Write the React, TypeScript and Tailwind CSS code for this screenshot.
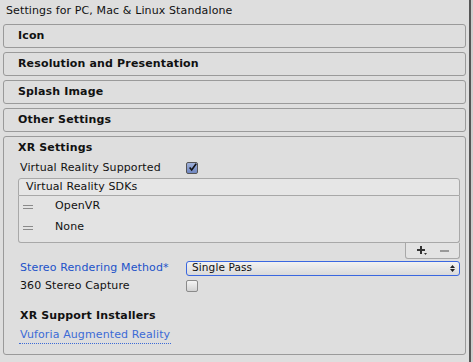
import React from "react";

const font = { fontFamily: '"DejaVu Sans", Verdana, sans-serif' };

function Foldout({ title }: { title: string }) {
  return (
    <div className="h-[24px] rounded-[3px] border border-[#9a9a9a] bg-[#dedede] flex items-center pl-[14px] text-[11px] font-bold text-[#111] tracking-[0.15px]">
      {title}
    </div>
  );
}

function Check({ checked }: { checked?: boolean }) {
  return (
    <div
      className={
        "w-[12px] h-[12px] rounded-[2px] border flex items-center justify-center " +
        (checked
          ? "border-[#555] bg-gradient-to-b from-[#9fb0d8] to-[#6f86c0]"
          : "border-[#8a8a8a] bg-gradient-to-b from-[#f4f4f4] to-[#d2d2d2]")
      }
    >
      {checked && (
        <svg width="11" height="11" viewBox="0 0 11 11" className="-mt-[2px] ml-[1px]">
          <path d="M2 5.5 L4.5 8.5 L10 1" stroke="#111" strokeWidth="2" fill="none" />
        </svg>
      )}
    </div>
  );
}

function Handle() {
  return (
    <div className="w-[10px] flex flex-col gap-[2px]">
      <div className="h-px bg-[#8a8a8a]" />
      <div className="h-px bg-[#8a8a8a]" />
    </div>
  );
}

export default function App() {
  return (
    <div className="w-[473px] h-[362px] bg-[#dedede] flex text-[#111] tracking-[0.12px]" style={font}>
      <div className="w-[469px] flex flex-col pl-[3px] pr-[3px]">
        <div className="h-[22px] flex items-center pl-[3px] text-[11px]">Settings for PC, Mac &amp; Linux Standalone</div>
        <div className="flex flex-col gap-[4px] mt-[2px]">
          <Foldout title="Icon" />
          <Foldout title="Resolution and Presentation" />
          <Foldout title="Splash Image" />
          <Foldout title="Other Settings" />
          <div className="h-[219px] rounded-[3px] border border-[#9a9a9a] bg-[#dedede] flex flex-col pl-[13px] pr-[5px] text-[11px]">
            <div className="h-[23px] flex items-center pl-[1px] font-bold tracking-[0.15px]">XR Settings</div>
            <div className="h-[16px] flex items-center">
              <div className="w-[169px] pl-[3px]">Virtual Reality Supported</div>
              <Check checked />
            </div>
            <div className="mt-[2px] ml-[1px] flex flex-col">
              <div className="h-[18px] rounded-t-[3px] border border-[#a8a8a8] bg-[#e6e6e6] flex items-center pl-[7px]">Virtual Reality SDKs</div>
              <div className="h-[47px] rounded-b-[3px] border border-t-0 border-[#a8a8a8] bg-[#e3e3e3] flex flex-col">
                <div className="h-[21px] flex items-center pl-[4px]">
                  <Handle />
                  <span className="ml-[22px]">OpenVR</span>
                </div>
                <div className="h-[21px] flex items-center pl-[4px]">
                  <Handle />
                  <span className="ml-[22px]">None</span>
                </div>
              </div>
              <div className="flex justify-end">
                <div className="w-[55px] h-[16px] rounded-b-[3px] border border-t-0 border-[#a8a8a8] bg-[#e3e3e3] flex items-center justify-around px-[4px]">
                  <svg width="11" height="11" viewBox="0 0 11 11">
                    <path d="M4 1h2v3h3v2H6v3H4V6H1V4h3z" fill="#333" />
                    <path d="M8 8h3l-1.5 2z" fill="#333" />
                  </svg>
                  <div className="w-[9px] h-[2px] bg-[#999]" />
                </div>
              </div>
            </div>
            <div className="h-[18px] flex items-center">
              <div className="w-[169px] pl-[3px] text-[#2152c9]">Stereo Rendering Method*</div>
              <div className="flex-1 h-[15px] rounded-[3px] border border-[#3a67e0] bg-gradient-to-b from-[#f2f2f2] to-[#dadada] flex items-center pl-[5px] pr-[4px] text-[10.5px]">
                <span className="flex-1">Single Pass</span>
                <svg width="5" height="9" viewBox="0 0 5 9">
                  <path d="M0 4L2.5 1L5 4z M0 5L2.5 8L5 5z" fill="#222" />
                </svg>
              </div>
            </div>
            <div className="h-[18px] flex items-center">
              <div className="w-[169px] pl-[3px]">360 Stereo Capture</div>
              <Check />
            </div>
            <div className="h-[22px] mt-[10px] flex items-center pl-[3px] font-bold tracking-[0.15px]">XR Support Installers</div>
            <div className="h-[17px] flex items-center pl-[2px]">
              <span className="text-[#3c6bd6] border-b border-dotted border-[#3c6bd6] px-[1px] leading-[16px]">Vuforia Augmented Reality</span>
            </div>
          </div>
        </div>
      </div>
      <div className="w-[2px] bg-[#555]" />
      <div className="flex-1 bg-[#cfcfcf]" />
    </div>
  );
}
